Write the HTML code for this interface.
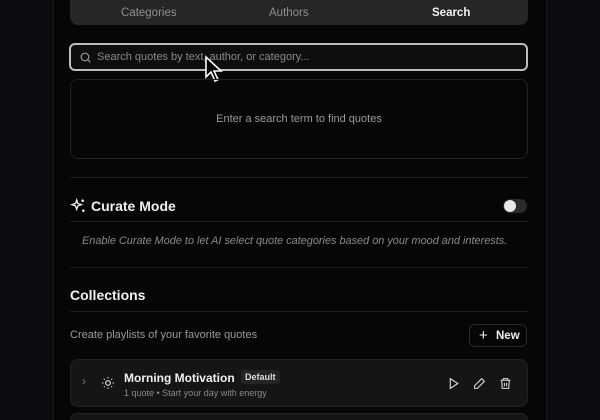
<!DOCTYPE html>
<html><head><style>
*{box-sizing:border-box;margin:0;padding:0}
html{overflow:hidden}
body{width:600px;height:420px;overflow:hidden;background:#0d0c11;font-family:"Liberation Sans",sans-serif;position:relative}
.panel{position:absolute;left:53px;top:0;width:494px;height:420px;background:#060606;border-left:1px solid #1a1a1c;border-right:1px solid #1a1a1c}
.abs{position:absolute}
.tabs{left:70px;top:0;width:458px;height:25px;background:#262628;border-radius:0 0 8px 8px}
.tab{position:absolute;top:7px;font-size:11.5px;color:#8e8e90}
.search{left:69px;top:43px;width:459px;height:28px;border:2px solid #bdbdbd;border-radius:6px;background:#0e0e0e}
.empty{left:70px;top:79px;width:458px;height:80px;border:1px solid #222;border-radius:8px;text-align:center;line-height:78px;font-size:11px;color:#9a9a9a}
.hr{position:absolute;left:70px;width:458px;height:1px;background:#1e1e1e}
.card{left:70px;top:359px;width:458px;height:48px;background:#151516;border:1px solid #222;border-radius:8px}
</style></head><body>
<div class="panel"></div>
<div class="abs tabs">
<span class="tab" style="left:51px">Categories</span>
<span class="tab" style="left:199px">Authors</span>
<span class="tab" style="left:362px;color:#f2f2f2;font-weight:bold">Search</span>
</div>
<div class="abs search">
<svg class="abs" style="left:8px;top:6px" width="13" height="13" viewBox="0 0 24 24" fill="none" stroke="#999" stroke-width="2.2"><circle cx="11" cy="11" r="7"/><path d="M16 16l5 5"/></svg>
<span class="abs" style="left:26px;top:6px;font-size:11px;color:#8a8a8a">Search quotes by text, author, or category...</span>
</div>
<svg class="abs" style="left:204px;top:55px" width="20" height="30" viewBox="0 0 20 30"><path d="M2 2v20l5-5 4 9 3-1.5-4-8.5h7z" fill="#000" stroke="#fff" stroke-width="1.6"/></svg>
<div class="abs empty">Enter a search term to find quotes</div>
<div class="hr" style="top:177px"></div>
<svg class="abs" style="left:70px;top:198px" width="16" height="16" viewBox="0 0 24 24" fill="none" stroke="#eee" stroke-width="2"><path d="M10 3l1.8 5.2L17 10l-5.2 1.8L10 17l-1.8-5.2L3 10l5.2-1.8z"/><path d="M19 2v4M17 4h4M20 17v4M18 19h4"/></svg>
<span class="abs" style="left:91px;top:198px;font-size:14px;font-weight:bold;color:#f0f0f0">Curate Mode</span>
<div class="abs" style="left:503px;top:199px;width:24px;height:14px;border-radius:7px;background:#2a2a2a"><div style="margin:1px;width:12px;height:12px;border-radius:6px;background:#e8e8e8"></div></div>
<div class="hr" style="top:221px"></div>
<span class="abs" style="left:82px;top:235px;font-size:10.9px;font-style:italic;color:#8a8a8a">Enable Curate Mode to let AI select quote categories based on your mood and interests.</span>
<div class="hr" style="top:267px"></div>
<span class="abs" style="left:70px;top:287px;font-size:14px;font-weight:bold;color:#f0f0f0">Collections</span>
<div class="hr" style="top:311px"></div>
<span class="abs" style="left:70px;top:329px;font-size:11px;color:#9a9a9a">Create playlists of your favorite quotes</span>
<div class="abs" style="left:469px;top:324px;width:58px;height:23px;border:1px solid #2a2a2a;border-radius:6px;color:#eee;font-size:11.5px;font-weight:bold"><span class="abs" style="left:9px;top:2px;font-size:15px;font-weight:normal">+</span><span class="abs" style="left:26px;top:5px">New</span></div>
<div class="abs card">
<span class="abs" style="left:11px;top:14px;color:#777;font-size:12px">›</span>
<svg class="abs" style="left:30px;top:16px" width="14" height="14" viewBox="0 0 24 24" fill="none" stroke="#ddd" stroke-width="2"><circle cx="12" cy="12" r="4"/><path d="M12 2v2M12 20v2M2 12h2M20 12h2M4.9 4.9l1.4 1.4M17.7 17.7l1.4 1.4M4.9 19.1l1.4-1.4M17.7 6.3l1.4-1.4"/></svg>
<span class="abs" style="left:53px;top:11px;font-size:12px;font-weight:bold;color:#f0f0f0">Morning Motivation</span>
<span class="abs" style="left:170px;top:10px;padding:2px 4px;background:#242424;border-radius:3px;font-size:9px;font-weight:bold;color:#ddd">Default</span>
<span class="abs" style="left:53px;top:28px;font-size:9px;color:#8a8a8a">1 quote • Start your day with energy</span>
<svg class="abs" style="left:376px;top:17px" width="13" height="13" viewBox="0 0 24 24" fill="none" stroke="#ddd" stroke-width="2"><path d="M6 3l14 9-14 9z"/></svg>
<svg class="abs" style="left:402px;top:17px" width="13" height="13" viewBox="0 0 24 24" fill="none" stroke="#ddd" stroke-width="2"><path d="M16 3l5 5L8 21H3v-5z"/></svg>
<svg class="abs" style="left:428px;top:17px" width="13" height="13" viewBox="0 0 24 24" fill="none" stroke="#ddd" stroke-width="2"><path d="M3 6h18M8 6V3h8v3M5 6l1 15h12l1-15M10 11v6M14 11v6"/></svg>
</div>
<div class="abs" style="left:70px;top:413px;width:458px;height:7px;background:#151516;border:1px solid #222;border-bottom:none;border-radius:8px 8px 0 0"></div>
</body></html>
